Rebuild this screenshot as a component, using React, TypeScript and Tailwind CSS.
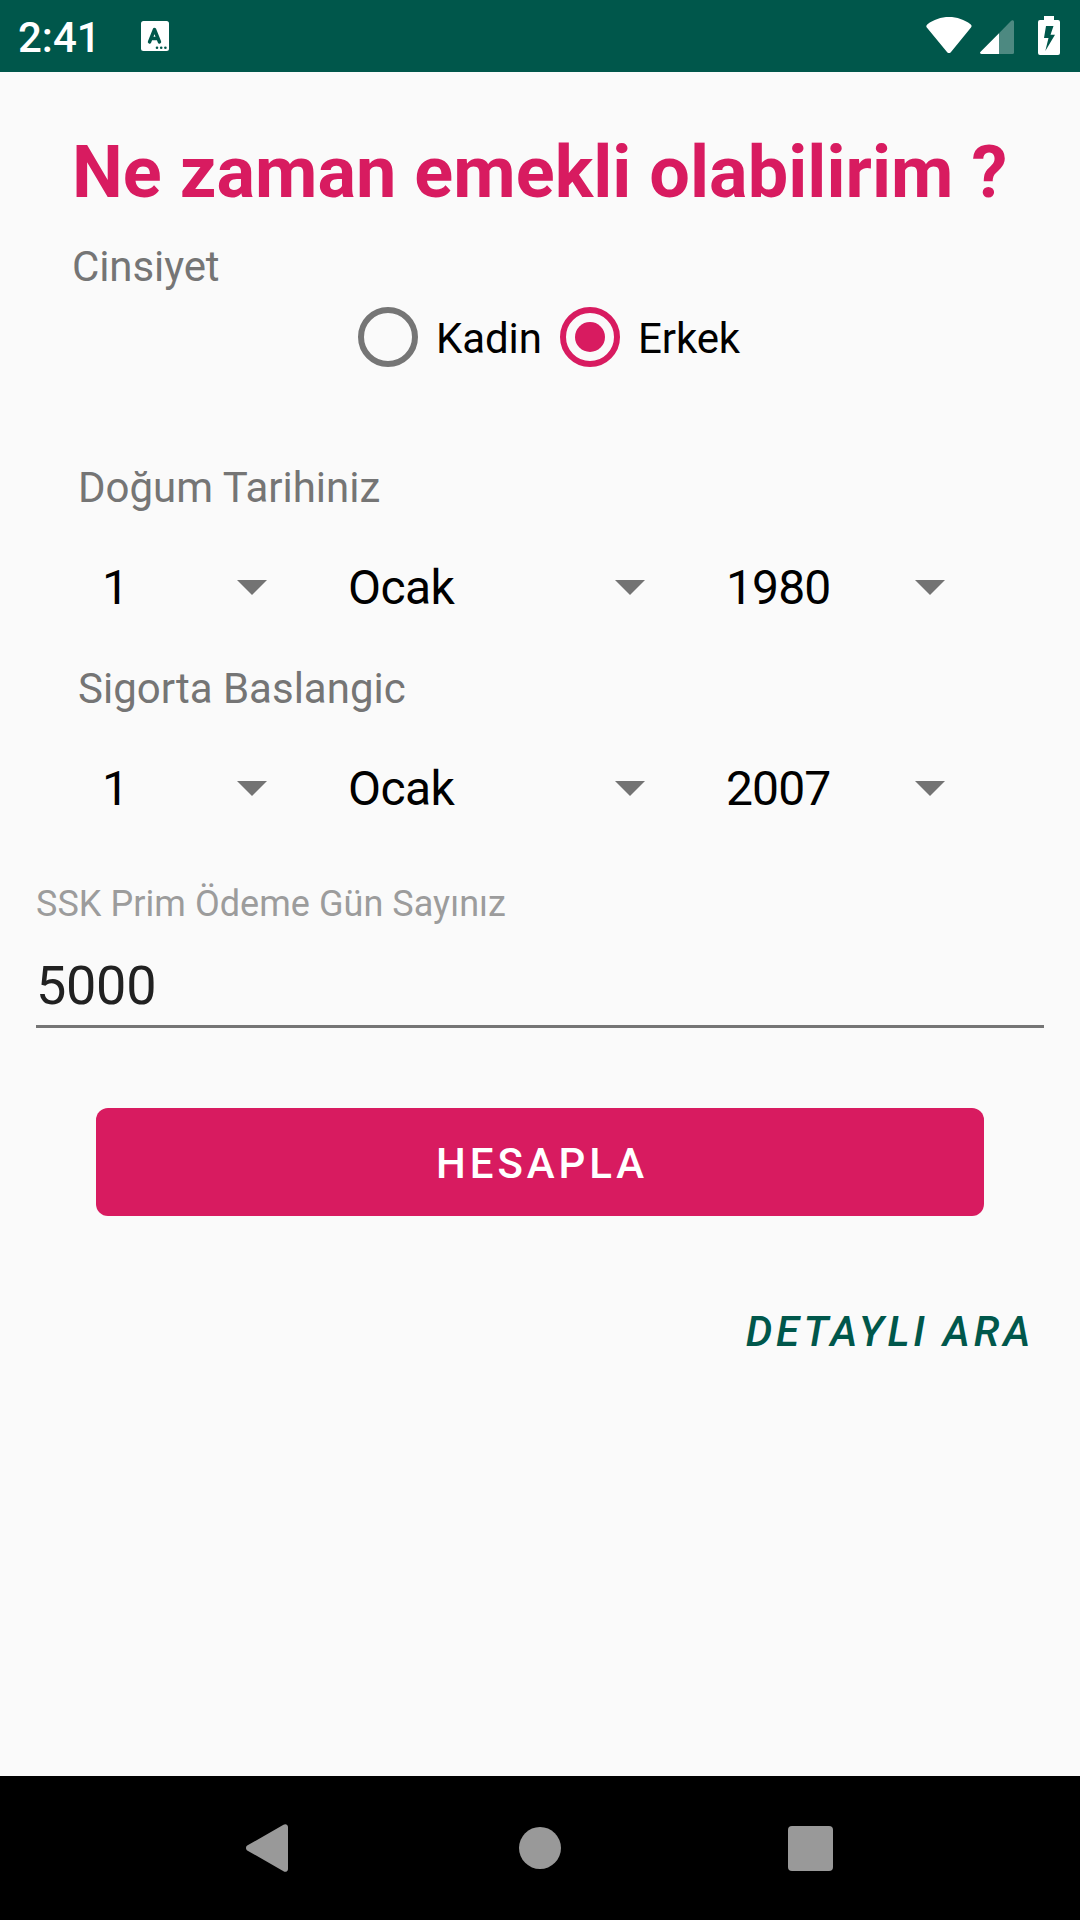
import React from "react";

function Spinner({ value, className }: { value: string; className: string }) {
  return (
    <button className={`flex h-[72px] items-center justify-between text-[48px] leading-[72px] text-black ${className}`}>
      <span>{value}</span>
      <svg className="mb-px" width="30" height="15" viewBox="0 0 30 15" fill="#737373">
        <path d="M0 0H30L15 15Z" />
      </svg>
    </button>
  );
}

function DateRow({ year, className }: { year: string; className: string }) {
  return (
    <div className={`flex pl-[102px] ${className}`}>
      <Spinner value="1" className="w-[165px]" />
      <Spinner value="Ocak" className="ml-[81px] w-[297px] tracking-[-0.6px]" />
      <Spinner value={year} className="ml-[81px] w-[219px] tracking-[-0.9px]" />
    </div>
  );
}

function Radio({ label, checked, className }: { label: string; checked: boolean; className: string }) {
  return (
    <label className={`flex h-[60px] items-center ${className}`}>
      <span
        className={`flex size-[60px] items-center justify-center rounded-full border-6 ${
          checked ? "border-[#d81b60]" : "border-[#757575]"
        }`}
      >
        {checked && <span className="size-[30px] rounded-full bg-[#d81b60]" />}
      </span>
      <span className="ml-[18px] pt-1 text-[42px] leading-[50px] tracking-[-0.1px] text-black">{label}</span>
    </label>
  );
}

function StatusBar() {
  return (
    <header className="flex h-[72px] bg-[#00574b] pl-[18px] text-white">
      <span className="w-[123px] pt-[13px] text-[42px] leading-[50px] font-medium">2:41</span>
      <svg className="mt-[21px]" width="28" height="30" viewBox="0 0 28 30">
        <rect width="28" height="30" rx="2.5" fill="#fff" />
        <path d="M8.500 21 13.500 8.500 18.500 21M10.200 17.500H16.800" fill="none" stroke="#00574b" strokeWidth="3.4" strokeLinecap="round" strokeLinejoin="round" />
        <g fill="#00574b">
          <circle cx="16" cy="26.7" r="1.3" />
          <circle cx="20.2" cy="26.7" r="1.3" />
          <circle cx="24.4" cy="26.7" r="1.3" />
        </g>
      </svg>
      <svg className="ml-[757px] mt-[17px]" width="46" height="37" viewBox="0 0 46 37">
        <path d="M1.500 7.200C7.500 2.700 15 0 23 0s15.500 2.700 21.500 7.200c1.200.9 1.400 2.200.5 3.300L24.800 35.200c-1 1.200-2.600 1.200-3.600 0L.8 10.500C-.1 9.400.3 8.100 1.500 7.200Z" fill="#fff" />
      </svg>
      <svg className="ml-[8px] mt-[20px]" width="34" height="34" viewBox="0 0 34 34">
        <path d="M19 13.200 31.200.8C32.300-.3 34 .3 34 2v30.500a1.500 1.500 0 0 1-1.500 1.500H19Z" fill="#fff" fillOpacity=".3" />
        <path d="M19 13.200V34H1.500C0 34-.4 32.700.6 31.700Z" fill="#fff" />
      </svg>
      <svg className="ml-[24px] mt-[16px]" width="22" height="39" viewBox="0 0 22 39">
        <path fillRule="evenodd" d="M6 0H16V4H20a2 2 0 0 1 2 2V37a2 2 0 0 1-2 2H2a2 2 0 0 1-2-2V6A2 2 0 0 1 2 4H6ZM8 10 6 22H10.500L7.300 35 17 18.700H12.500L15.500 10Z" fill="#fff" />
      </svg>
    </header>
  );
}

export default function App() {
  return (
    <div className="flex h-[1920px] w-[1080px] flex-col overflow-hidden bg-[#fafafa] font-['Roboto',sans-serif]">
      <StatusBar />
      <main className="flex flex-1 flex-col">
        <h1 className="mt-[59px] pl-[72px] text-[72px] leading-[84px] font-bold tracking-[0.05px] whitespace-nowrap text-[#d81b60]">
          Ne zaman emekli olabilirim ?
        </h1>
        <p className="mt-[27px] pl-[72px] text-[42px] leading-[50px] tracking-[-0.1px] text-[#757575]">Cinsiyet</p>
        <div className="mt-[15px] flex pl-[358px]">
          <Radio label="Kadin" checked={false} className="w-[202px]" />
          <Radio label="Erkek" checked className="" />
        </div>
        <p className="mt-[96px] pl-[78px] text-[42px] leading-[50px] text-[#757575]">Doğum Tarihiniz</p>
        <DateRow year="1980" className="mt-[39px]" />
        <p className="mt-[40px] pl-[78px] text-[42px] leading-[50px] text-[#757575]">Sigorta Baslangic</p>
        <DateRow year="2007" className="mt-[39px]" />
        <label className="mx-9 mt-[58px] flex flex-col border-b-3 border-[#757575]">
          <span className="text-[36px] leading-[42px] tracking-[0.05px] text-[#9c9c9c]">SSK Prim Ödeme Gün Sayınız</span>
          <span className="mt-[29px] h-[71px] text-[54px] leading-[64px] tracking-[-0.3px] text-[#212121]">5000</span>
        </label>
        <button className="mx-24 mt-20 flex h-[108px] items-center justify-center rounded-[12px] bg-[#d81b60] pt-[3px] pl-[4px] text-[42px] font-medium tracking-[3.9px] text-white">
          HESAPLA
        </button>
        <button className="mt-[91px] mr-[46px] self-end text-[42px] leading-[50px] font-medium tracking-[3.85px] text-[#00574b] italic">
          DETAYLI ARA
        </button>
      </main>
      <nav className="flex h-[144px] items-center bg-black text-[#999]">
        <svg className="ml-[246px]" width="42" height="48" viewBox="0 0 42 48" fill="currentColor">
          <path d="M1.200 21.600 37.500.7C39.500-.6 42 .6 42 3V45c0 2.400-2.500 3.600-4.500 2.300L1.200 26.400c-1.600-1-1.600-3.800 0-4.800Z" />
        </svg>
        <span className="ml-[231px] size-[42px] rounded-full bg-[#999]" />
        <span className="ml-[226.500px] size-[45px] rounded-[4px] bg-[#999]" />
      </nav>
    </div>
  );
}
